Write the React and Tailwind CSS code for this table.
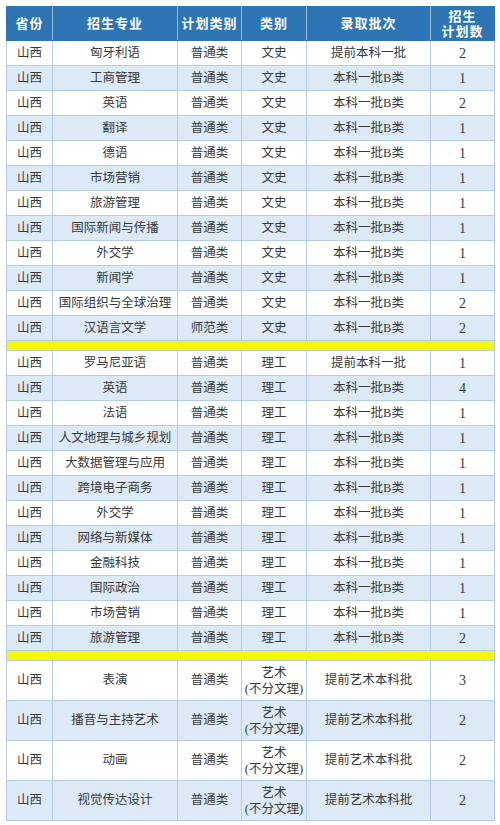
import React from 'react';

const wenshi = [
  ['匈牙利语', '普通类', '文史', '提前本科一批', '2'],
  ['工商管理', '普通类', '文史', '本科一批B类', '1'],
  ['英语', '普通类', '文史', '本科一批B类', '2'],
  ['翻译', '普通类', '文史', '本科一批B类', '1'],
  ['德语', '普通类', '文史', '本科一批B类', '1'],
  ['市场营销', '普通类', '文史', '本科一批B类', '1'],
  ['旅游管理', '普通类', '文史', '本科一批B类', '1'],
  ['国际新闻与传播', '普通类', '文史', '本科一批B类', '1'],
  ['外交学', '普通类', '文史', '本科一批B类', '1'],
  ['新闻学', '普通类', '文史', '本科一批B类', '1'],
  ['国际组织与全球治理', '普通类', '文史', '本科一批B类', '2'],
  ['汉语言文学', '师范类', '文史', '本科一批B类', '2'],
];

const ligong = [
  ['罗马尼亚语', '普通类', '理工', '提前本科一批', '1'],
  ['英语', '普通类', '理工', '本科一批B类', '4'],
  ['法语', '普通类', '理工', '本科一批B类', '1'],
  ['人文地理与城乡规划', '普通类', '理工', '本科一批B类', '1'],
  ['大数据管理与应用', '普通类', '理工', '本科一批B类', '1'],
  ['跨境电子商务', '普通类', '理工', '本科一批B类', '1'],
  ['外交学', '普通类', '理工', '本科一批B类', '1'],
  ['网络与新媒体', '普通类', '理工', '本科一批B类', '1'],
  ['金融科技', '普通类', '理工', '本科一批B类', '1'],
  ['国际政治', '普通类', '理工', '本科一批B类', '1'],
  ['市场营销', '普通类', '理工', '本科一批B类', '1'],
  ['旅游管理', '普通类', '理工', '本科一批B类', '2'],
];

const yishu = [
  ['表演', '普通类', '艺术', '提前艺术本科批', '3'],
  ['播音与主持艺术', '普通类', '艺术', '提前艺术本科批', '2'],
  ['动画', '普通类', '艺术', '提前艺术本科批', '2'],
  ['视觉传达设计', '普通类', '艺术', '提前艺术本科批', '2'],
];

const cell = 'border border-[#b4cde6] text-center align-middle p-0';

const Row = ({ r, i, tall }) => (
  <tr className={`${tall ? 'h-[40px]' : 'h-[25px]'} ${i % 2 === 1 ? 'bg-[#dce9f6]' : 'bg-white'}`}>
    <td className={cell}>山西</td>
    <td className={cell}>{r[0]}</td>
    <td className={cell}>{r[1]}</td>
    <td className={`${cell} leading-[16px]`}>
      {tall ? (
        <>
          <div>{r[2]}</div>
          <div>(不分文理)</div>
        </>
      ) : (
        r[2]
      )}
    </td>
    <td className={cell}>{r[3]}</td>
    <td className={`${cell} text-[14px]`}>{r[4]}</td>
  </tr>
);

const Band = () => (
  <tr className="h-[10px] bg-[#f7f700]">
    <td colSpan={6} className="border border-[#b4cde6] p-0"></td>
  </tr>
);

const App = () => {
  return (
    <div
      className="min-h-screen bg-white pt-[6px] pl-[6px] text-[#3a3a3a] text-[12.5px]"
      style={{ fontFamily: '"Liberation Serif", "Noto Sans CJK SC", serif' }}
    >
      <table className="table-fixed border-collapse w-[488px]">
        <colgroup>
          <col className="w-[46px]" />
          <col className="w-[125px]" />
          <col className="w-[64px]" />
          <col className="w-[65px]" />
          <col className="w-[124px]" />
          <col className="w-[64px]" />
        </colgroup>
        <thead>
          <tr className="h-[34px] bg-[#2e75b6] text-white font-bold text-[13px] tracking-[1px]">
            <th className="border border-[#2e75b6] border-r-[#9bbde0]">省份</th>
            <th className="border border-[#2e75b6] border-r-[#9bbde0]">招生专业</th>
            <th className="border border-[#2e75b6] border-r-[#9bbde0]">计划类别</th>
            <th className="border border-[#2e75b6] border-r-[#9bbde0]">类别</th>
            <th className="border border-[#2e75b6] border-r-[#9bbde0]">录取批次</th>
            <th className="border border-[#2e75b6] leading-[15px]">
              <div>招生</div>
              <div>计划数</div>
            </th>
          </tr>
        </thead>
        <tbody>
          {wenshi.map((r, i) => (
            <Row key={'w' + i} r={r} i={i} />
          ))}
          <Band />
          {ligong.map((r, i) => (
            <Row key={'l' + i} r={r} i={i} />
          ))}
          <Band />
          {yishu.map((r, i) => (
            <Row key={'y' + i} r={r} i={i} tall />
          ))}
        </tbody>
      </table>
    </div>
  );
};

export default App;
